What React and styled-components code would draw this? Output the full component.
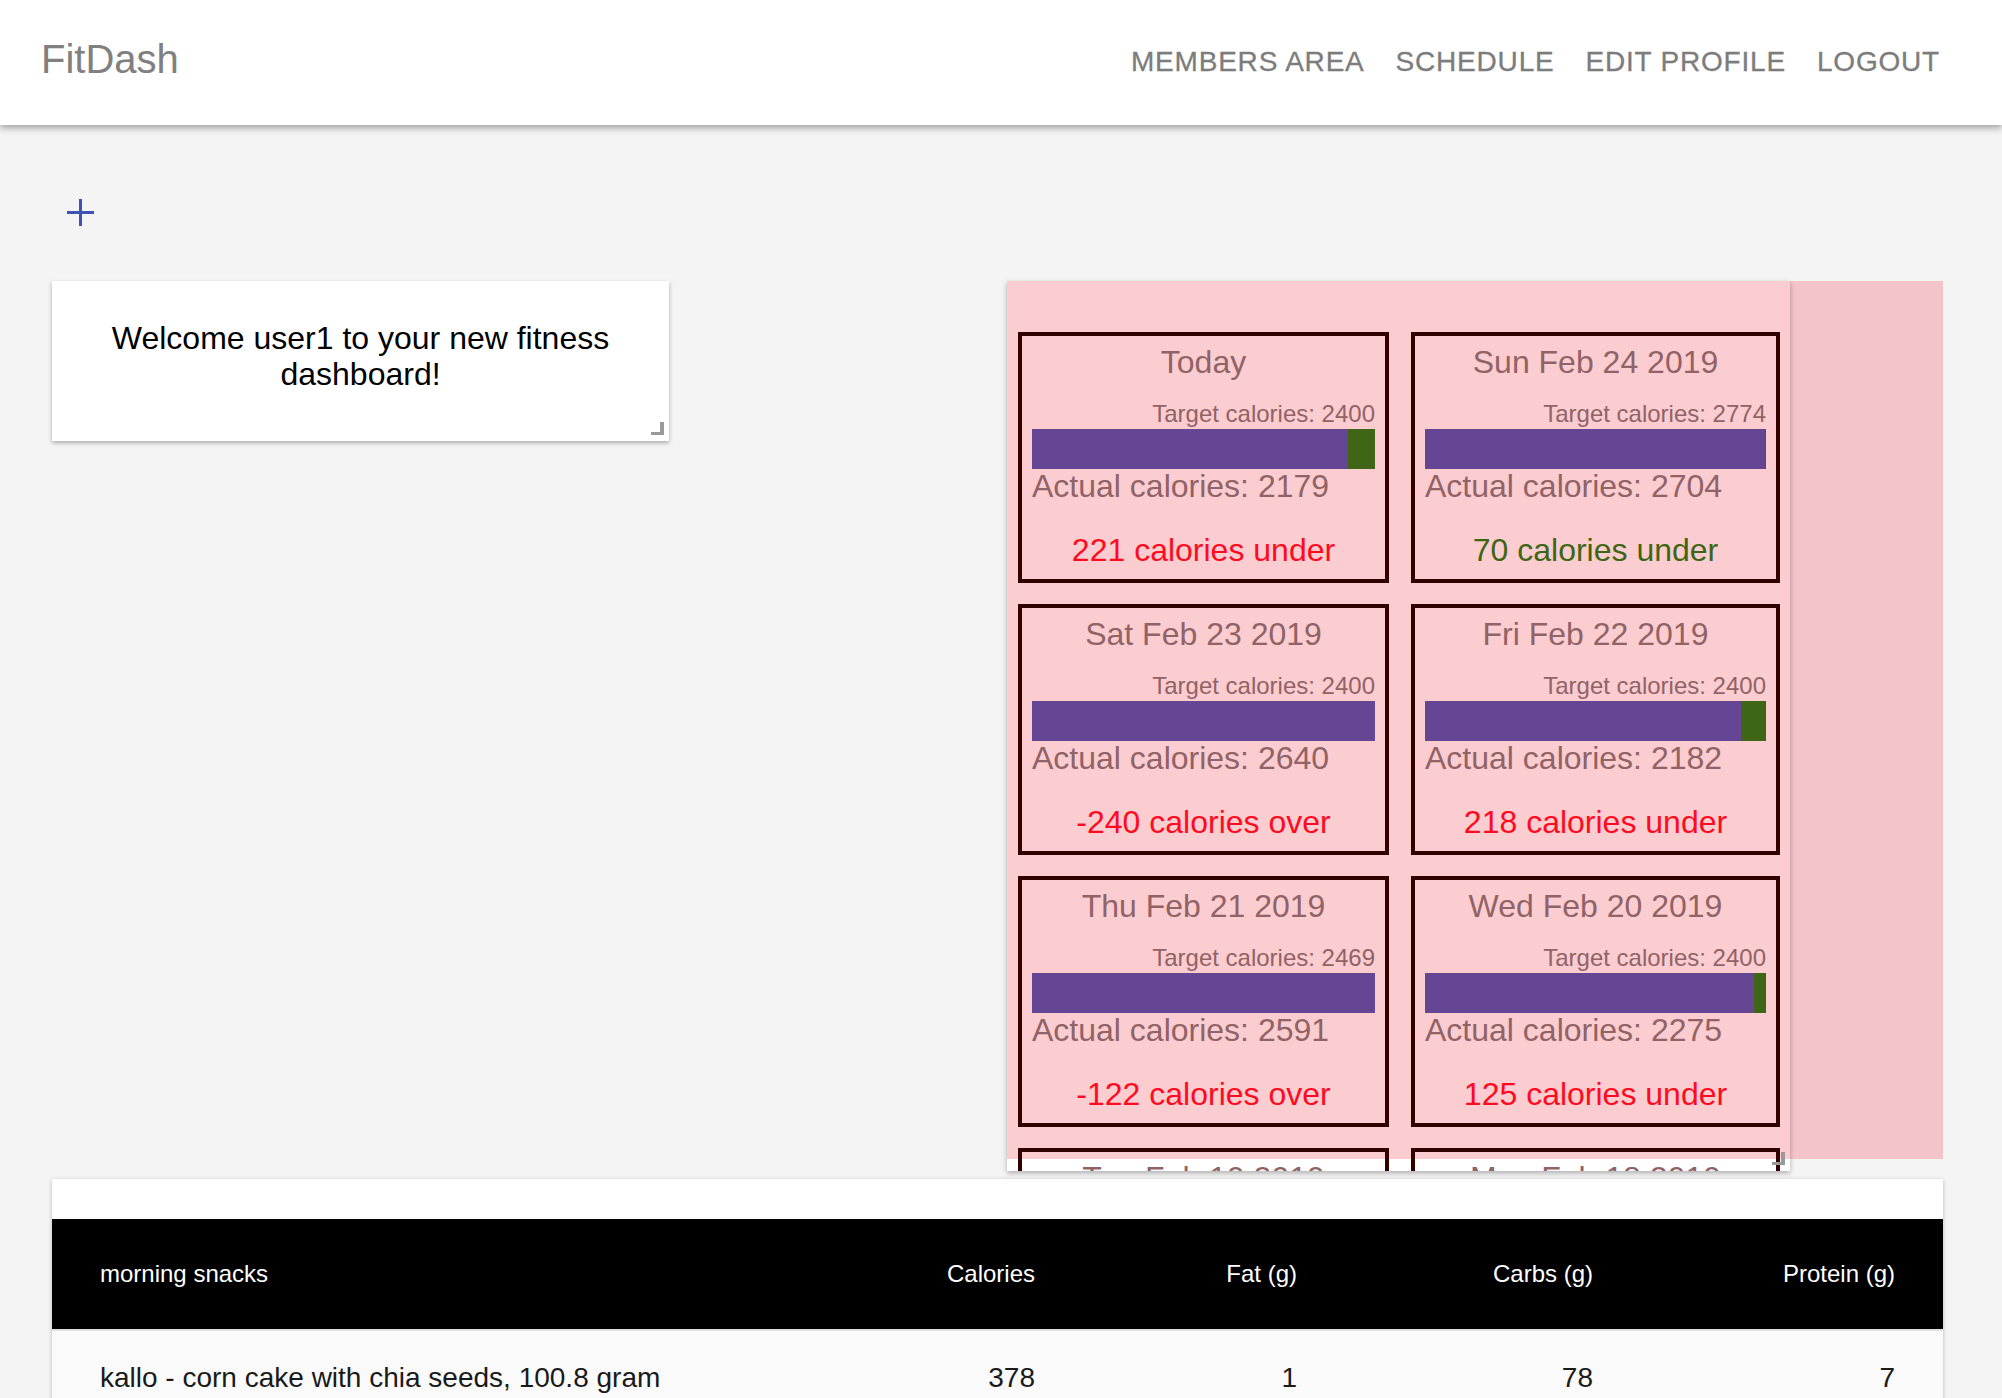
import React from 'react';
import styled, { createGlobalStyle } from 'styled-components';

const GlobalStyle = createGlobalStyle`
  html, body {
    margin: 0;
    padding: 0;
    overflow: hidden;
    background: #f4f4f4;
    font-family: "Liberation Sans", Arial, Helvetica, sans-serif;
  }
  * { box-sizing: border-box; }
`

const Header = styled.header`
  position: relative;
  z-index: 3;
  height: 125px;
  display: flex;
  align-items: center;
  justify-content: space-between;
  padding: 0 47px 0 41px;
  background: #fff;
  box-shadow: 0 3px 7px rgba(0, 0, 0, 0.35);
`
const Brand = styled.div`
  font-size: 40px;
  color: #808080;
  margin-bottom: 7px;
`
const Nav = styled.nav`
  display: flex;
  align-items: center;
  margin-bottom: 2px;
`
const NavButton = styled.button`
  border: none;
  background: transparent;
  padding: 0 15.5px;
  font-family: inherit;
  font-size: 28px;
  letter-spacing: 0.8px;
  text-transform: uppercase;
  color: #7c7c7c;
  -webkit-text-stroke: 0.3px #7c7c7c;
  cursor: pointer;
  &:last-child { padding-right: 15px; }
`

const Main = styled.main`
  display: flex;
  flex-direction: column;
  padding: 73px 59px 0 52px;
`
const AddButton = styled.button`
  display: flex;
  width: 29px;
  height: 29px;
  margin: 0 0 54px 14px;
  padding: 0;
  border: none;
  background: transparent;
`
const TopRow = styled.div`
  display: flex;
  justify-content: space-between;
  align-items: flex-start;
  height: 878px;
`
const WelcomeCard = styled.div`
  position: relative;
  width: 617px;
  height: 160px;
  padding: 39px 40px 0;
  background: #fff;
  box-shadow: 0 2px 4px rgba(0, 0, 0, 0.3);
  text-align: center;
  font-size: 32px;
  line-height: 36px;
  color: #000;
`
const ResizeHandle = styled.span`
  position: absolute;
  right: 5px;
  bottom: ${p => p.bottom || 6}px;
  width: 13px;
  height: 13px;
  border-right: 4px solid #999;
  border-bottom: 3px solid #999;
`
const PinkWrap = styled.div`
  width: 936px;
  height: 878px;
  background: #f4c5c8;
`
const Panel = styled.section`
  position: relative;
  width: 783px;
  height: 890px;
  overflow: hidden;
  background: #fff;
  box-shadow: 0 2px 5px rgba(0, 0, 0, 0.3);
`
const PinkArea = styled.div`
  height: 878px;
  padding: 51px 10px 0 11px;
  background: #fccdd0;
`
const DayGrid = styled.div`
  display: grid;
  grid-template-columns: 371px 369px;
  column-gap: 22px;
  row-gap: 21px;
`
const DayCard = styled.div`
  display: flex;
  flex-direction: column;
  height: 251px;
  padding: 10px 10px 13px;
  border: 4px solid #300;
  color: #916266;
`
const DayTitle = styled.div`
  font-size: 32px;
  line-height: 32px;
  text-align: center;
`
const Target = styled.div`
  margin-top: 24px;
  font-size: 24px;
  line-height: 24px;
  text-align: right;
`
const Bar = styled.div`
  display: flex;
  height: 40px;
  margin-top: 3px;
`
const BarActual = styled.div`
  flex: 1;
  background: #654694;
`
const BarRest = styled.div`
  background: #3f6516;
`
const Actual = styled.div`
  margin-top: 1px;
  font-size: 32px;
  line-height: 32px;
`
const Diff = styled.div`
  margin-top: 32px;
  font-size: 32px;
  line-height: 32px;
  text-align: center;
  color: ${p => (p.good ? '#3d6614' : '#ff0a1e')};
`

const TableCard = styled.section`
  margin-top: 20px;
  padding-top: 40px;
  background: #fff;
  box-shadow: 0 1px 4px rgba(0, 0, 0, 0.25);
`
const Row = styled.div`
  display: grid;
  grid-template-columns: 1fr 263px 262px 296px 238px;
  align-items: center;
  height: ${p => (p.head ? 112 : 96)}px;
  background: ${p => (p.head ? '#000' : '#fafafa')};
  color: ${p => (p.head ? '#fff' : '#1a1a1a')};
  font-size: ${p => (p.head ? 24 : 28)}px;
  border-bottom: 2px solid #e0e0e0;
`
const Cell = styled.div`
  padding: 0 ${p => (p.last ? 48 : p.num ? 112 : 0)}px 0 ${p => (p.num ? 0 : 48)}px;
  text-align: ${p => (p.num ? 'right' : 'left')};
  white-space: nowrap;
`

const days = [
  { title: 'Today', target: 2400, actual: 2179, rest: 27 },
  { title: 'Sun Feb 24 2019', target: 2774, actual: 2704, rest: 1 },
  { title: 'Sat Feb 23 2019', target: 2400, actual: 2640, rest: 0 },
  { title: 'Fri Feb 22 2019', target: 2400, actual: 2182, rest: 25 },
  { title: 'Thu Feb 21 2019', target: 2469, actual: 2591, rest: 0 },
  { title: 'Wed Feb 20 2019', target: 2400, actual: 2275, rest: 12 },
  { title: 'Tue Feb 19 2019', target: 2400, actual: 2301, rest: 10 },
  { title: 'Mon Feb 18 2019', target: 2400, actual: 2250, rest: 14 },
]

const columns = ['Calories', 'Fat (g)', 'Carbs (g)', 'Protein (g)']
const foods = [
  { name: 'kallo - corn cake with chia seeds, 100.8 gram', values: [378, 1, 78, 7] },
]

function Day({ day }) {
  const diff = day.target - day.actual
  const text = diff >= 0 ? `${diff} calories under` : `${diff} calories over`
  return (
    <DayCard>
      <DayTitle>{day.title}</DayTitle>
      <Target>Target calories: {day.target}</Target>
      <Bar>
        <BarActual />
        <BarRest style={{ width: day.rest }} />
      </Bar>
      <Actual>Actual calories: {day.actual}</Actual>
      <Diff good={diff >= 0 && diff < 100}>{text}</Diff>
    </DayCard>
  )
}

export default function App() {
  return (
    <>
      <GlobalStyle />
      <Header>
        <Brand>FitDash</Brand>
        <Nav>
          <NavButton>Members Area</NavButton>
          <NavButton>Schedule</NavButton>
          <NavButton>Edit Profile</NavButton>
          <NavButton>Logout</NavButton>
        </Nav>
      </Header>
      <Main>
        <AddButton aria-label="add">
          <svg width="29" height="29" viewBox="0 0 29 29">
            <path d="M14.5 1v27M1 14.5h27" stroke="#3f51b5" strokeWidth="3" fill="none" />
          </svg>
        </AddButton>
        <TopRow>
          <WelcomeCard>
            Welcome user1 to your new fitness dashboard!
            <ResizeHandle />
          </WelcomeCard>
          <PinkWrap>
            <Panel>
              <PinkArea>
                <DayGrid>
                  {days.map(d => <Day key={d.title} day={d} />)}
                </DayGrid>
              </PinkArea>
              <ResizeHandle bottom={6} />
            </Panel>
          </PinkWrap>
        </TopRow>
        <TableCard>
          <Row head>
            <Cell>morning snacks</Cell>
            {columns.map((c, i) => (
              <Cell key={c} num last={i === columns.length - 1}>{c}</Cell>
            ))}
          </Row>
          {foods.map(f => (
            <Row key={f.name}>
              <Cell>{f.name}</Cell>
              {f.values.map((v, i) => (
                <Cell key={i} num last={i === f.values.length - 1}>{v}</Cell>
              ))}
            </Row>
          ))}
        </TableCard>
      </Main>
    </>
  )
}
